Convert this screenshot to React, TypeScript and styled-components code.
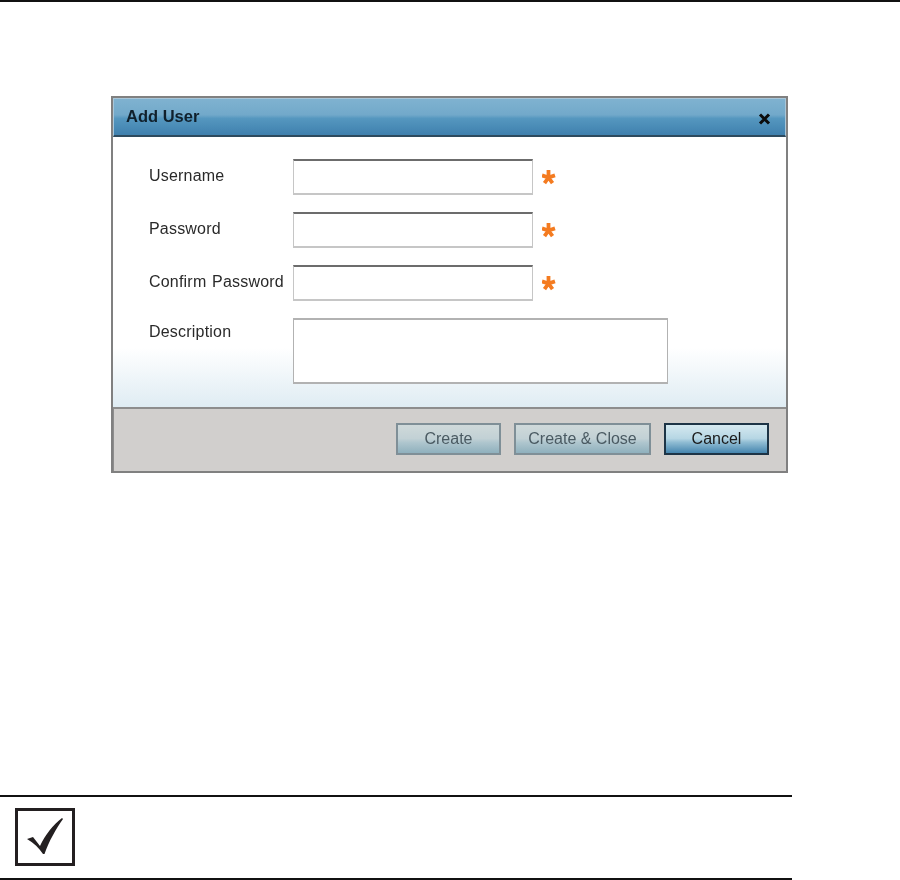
import styled, { createGlobalStyle } from 'styled-components'

const GlobalStyle = createGlobalStyle`
  html, body {
    margin: 0;
    padding: 0;
    background: #fff;
  }
  body {
    font-family: "Liberation Sans", Arial, sans-serif;
    color: #222;
  }
`

const Page = styled.div`
  width: 900px;
  height: 880px;
  overflow: hidden;
  display: flex;
  flex-direction: column;
`

const TopRule = styled.div`
  height: 2px;
  background: #111;
`

const Dialog = styled.section`
  box-sizing: border-box;
  width: 677px;
  height: 377px;
  margin: 94px 0 0 111px;
  display: flex;
  flex-direction: column;
  border: 2px solid #808080;
  background: #fff;
  filter: blur(0.35px);
`

const TitleBar = styled.header`
  box-sizing: border-box;
  height: 39px;
  flex: none;
  display: flex;
  align-items: center;
  justify-content: space-between;
  padding: 0 14px 2px 12px;
  border: 1px solid #a9c6d8;
  border-bottom: 2px solid #2d4a5e;
  background: linear-gradient(to bottom, #7fb2d0 0%, #72a9ca 44%, #5597bf 54%, #3f80ae 100%);
`

const Title = styled.h2`
  margin: 0;
  font-size: 16.5px;
  font-weight: bold;
  color: #10202c;
`

const CloseIcon = styled.svg`
  width: 13px;
  height: 12px;
  margin-top: 5px;
`

const Body = styled.div`
  flex: 1;
  box-sizing: border-box;
  display: flex;
  flex-direction: column;
  gap: 17px;
  padding: 22px 0 0 36px;
  background: linear-gradient(to bottom, #fff 0%, #fff 78%, #dfecf3 100%);
`

const Row = styled.div`
  display: flex;
  align-items: flex-start;
`

const Label = styled.label<{ $top: number }>`
  width: 144px;
  flex: none;
  padding-top: ${(p) => p.$top}px;
  font-size: 16px;
  letter-spacing: 0.2px;
  word-spacing: 1px;
  color: #2a2a2a;
`

const Field = styled.div`
  box-sizing: border-box;
  width: 240px;
  height: 36px;
  background: #fff;
  border: 1px solid #c6c6c6;
  border-bottom-width: 2px;
  border-top: 2px solid #6c6c6c;
`

const WideField = styled.div`
  box-sizing: border-box;
  width: 375px;
  height: 66px;
  background: #fff;
  border: 2px solid #b2b2b2;
  border-left-width: 1px;
  border-right-width: 1px;
`

const Star = styled.svg`
  width: 15px;
  height: 15px;
  margin: 11px 0 0 9px;
`

const Footer = styled.footer`
  box-sizing: border-box;
  height: 64px;
  flex: none;
  display: flex;
  justify-content: flex-end;
  align-items: flex-start;
  gap: 13px;
  padding: 14px 17px 0 0;
  background: #d1cfcd;
  border-top: 2px solid #8d8d8d;
  border-left: 1px solid #8d8d8d;
`

const Button = styled.button<{ $primary?: boolean; $w: number }>`
  box-sizing: border-box;
  width: ${(p) => p.$w}px;
  height: 32px;
  padding: 0;
  font-family: inherit;
  font-size: 16px;
  color: ${(p) => (p.$primary ? '#1a1a1a' : '#4a5a62')};
  border: 2px solid ${(p) => (p.$primary ? '#1d3446' : '#7f8f97')};
  background: ${(p) =>
    p.$primary
      ? 'linear-gradient(to bottom, #d5e9f0 0%, #b6d6e4 48%, #8fbcd3 62%, #4585ae 100%)'
      : 'linear-gradient(to bottom, #cfd9da 0%, #c2d1d5 48%, #afc6ce 62%, #8fb0bd 100%)'};
`

const Note = styled.aside`
  box-sizing: border-box;
  width: 792px;
  height: 85px;
  margin-top: auto;
  padding: 11px 0 0 15px;
  border-top: 2px solid #111;
  border-bottom: 2px solid #111;
`

const CheckBox = styled.div`
  box-sizing: border-box;
  width: 60px;
  height: 58px;
  border: 3px solid #231f20;
`

const FIELDS = ['Username', 'Password', 'Confirm Password']

const Asterisk = () => (
  <Star viewBox="0 0 15 15">
    <path
      d="M6.5 7.5V0M6.5 7.5l6.5-2.1M6.5 7.5l4 5.6M6.5 7.5l-4 5.6M6.5 7.5L0 5.4"
      stroke="#f47b20"
      strokeWidth="3.8"
      fill="none"
    />
  </Star>
)

export default function App() {
  return (
    <Page>
      <GlobalStyle />
      <TopRule />
      <Dialog>
        <TitleBar>
          <Title>Add User</Title>
          <CloseIcon viewBox="0 0 13 12">
            <path d="M2 1.5l9 9M11 1.5l-9 9" stroke="#0c0c0c" strokeWidth="3" />
          </CloseIcon>
        </TitleBar>
        <Body>
          {FIELDS.map((name) => (
            <Row key={name}>
              <Label $top={8}>{name}</Label>
              <Field />
              <Asterisk />
            </Row>
          ))}
          <Row>
            <Label $top={5}>Description</Label>
            <WideField />
          </Row>
        </Body>
        <Footer>
          <Button $w={105}>Create</Button>
          <Button $w={137}>Create &amp; Close</Button>
          <Button $w={105} $primary>
            Cancel
          </Button>
        </Footer>
      </Dialog>
      <Note>
        <CheckBox>
          <svg viewBox="0 0 54 52" width="54" height="52">
            <path d="M9 28l6-2 7 9C27 24 35 14 44 7l1 1C38 18 31 30 26.500 43H25C21 37 16 32 9 28z" fill="#231f20" />
          </svg>
        </CheckBox>
      </Note>
    </Page>
  )
}
